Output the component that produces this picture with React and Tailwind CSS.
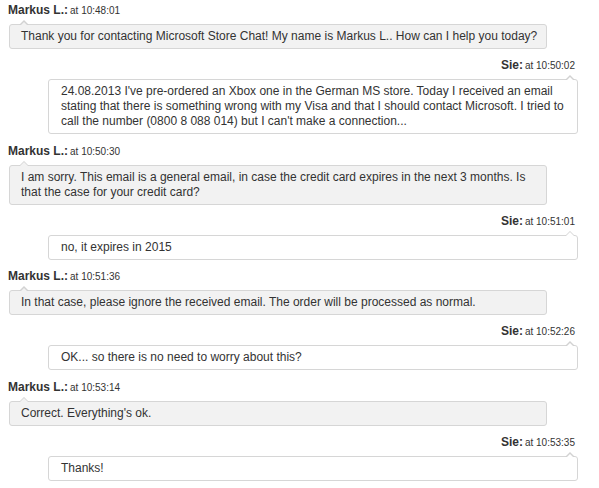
const messages = [
    { from: 'agent', name: 'Markus L.:', time: '10:48:01', lines: ['Thank you for contacting Microsoft Store Chat! My name is Markus L.. How can I help you today?'] },
    {
        from: 'me',
        name: 'Sie:',
        time: '10:50:02',
        lines: [
            "24.08.2013 I've pre-ordered an Xbox one in the German MS store. Today I received an email",
            'stating that there is something wrong with my Visa and that I should contact Microsoft. I tried to',
            "call the number (0800 8 088 014) but I can't make a connection...",
        ],
    },
    {
        from: 'agent',
        name: 'Markus L.:',
        time: '10:50:30',
        lines: ['I am sorry. This email is a general email, in case the credit card expires in the next 3 months. Is', 'that the case for your credit card?'],
    },
    { from: 'me', name: 'Sie:', time: '10:51:01', lines: ['no, it expires in 2015'] },
    { from: 'agent', name: 'Markus L.:', time: '10:51:36', lines: ['In that case, please ignore the received email. The order will be processed as normal.'] },
    { from: 'me', name: 'Sie:', time: '10:52:26', lines: ['OK... so there is no need to worry about this?'] },
    { from: 'agent', name: 'Markus L.:', time: '10:53:14', lines: ["Correct. Everything's ok."] },
    { from: 'me', name: 'Sie:', time: '10:53:35', lines: ['Thanks!'] },
];

function Tail({ mine }) {
    // little arrow sitting on the bubble's top border
    return (
        <span className={`absolute -top-[5px] ${mine ? 'right-[12px]' : 'left-[9px]'}`}>
            <span className="absolute left-0 top-0 h-0 w-0 border-x-[5px] border-b-[5px] border-x-transparent border-b-[#d2d2d2]" />
            <span
                className={`absolute left-[1px] top-[1.5px] h-0 w-0 border-x-[4px] border-b-[4px] border-x-transparent ${
                    mine ? 'border-b-white' : 'border-b-[#f2f2f2]'
                }`}
            />
        </span>
    );
}

export default function App() {
    return (
        <div className="min-h-screen bg-white pt-[3px] pl-[8px] font-['Liberation_Sans',Arial,sans-serif] text-[12px] text-[#333]">
            <div className="flex w-[570px] flex-col">
                {messages.map((m, i) => {
                    const mine = m.from === 'me';
                    return (
                        <div key={i} className={i > 0 ? 'mt-[9.3px]' : ''}>
                            <div className={`flex h-[14px] items-baseline leading-[14px] ${mine ? 'justify-end pr-[3px]' : ''}`}>
                                <span className="font-bold">{m.name}</span>
                                <span className="ml-[2px] text-[10px]">at {m.time}</span>
                            </div>
                            <div
                                className={`relative mt-[7px] rounded-[3px] border border-[#d6d6d6] px-[11px] py-[4px] leading-[15px] ${
                                    mine ? 'ml-[40px] bg-white pl-[12px]' : 'ml-[1px] mr-[31px] bg-[#f2f2f2]'
                                }`}
                            >
                                <Tail mine={mine} />
                                {m.lines.map((line, j) => (
                                    <div key={j} className="whitespace-nowrap">
                                        {line}
                                    </div>
                                ))}
                            </div>
                        </div>
                    );
                })}
            </div>
        </div>
    );
}
